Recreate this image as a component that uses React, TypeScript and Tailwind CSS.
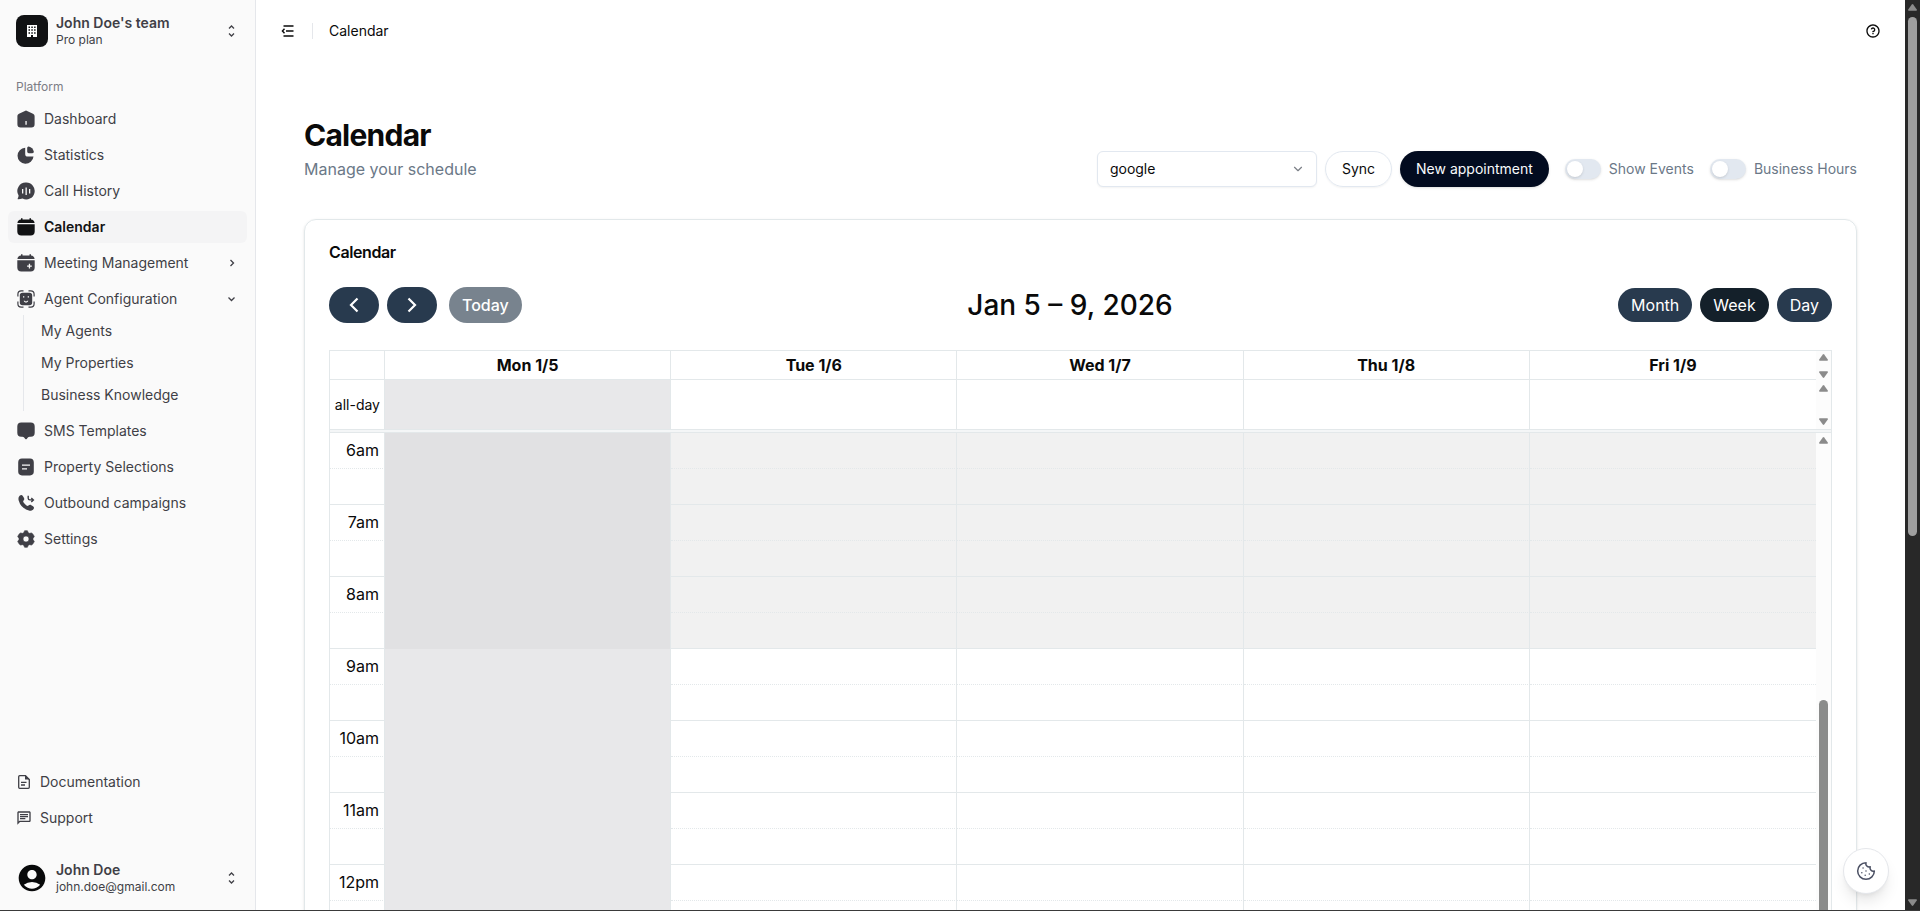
import { useState, type ReactNode } from "react";
import { ChevronDown, Cookie } from "lucide-react";
import { MdAccountCircle, MdOutlineChat } from "react-icons/md";
import { RiQuestionLine } from "react-icons/ri";

type IconProps = { children: ReactNode };

const NavSvg = ({ children }: IconProps) => (
  <svg width="20" height="20" viewBox="0 0 20 20" fill="currentColor" className="shrink-0" aria-hidden="true">
    {children}
  </svg>
);

const icons = {
  dashboard: (
    <NavSvg>
      <path
        fillRule="evenodd"
        d="M8.9 1.900a2.400 2.400 0 0 1 2.200 0l5.900 2.800c1 .5 1.600 1.400 1.600 2.500v8a3.300 3.300 0 0 1-3.300 3.300H4.700a3.300 3.300 0 0 1-3.300-3.300v-8c0-1.100.6-2 1.600-2.500zM9.400 12v3.800h1.300V12z"
      />
    </NavSvg>
  ),
  statistics: (
    <NavSvg>
      <path d="M9.200 2.800a8 8 0 1 0 8.300 8.700h-5.700a2.600 2.600 0 0 1-2.600-2.600z" />
      <path d="M11.200 3c0-.9.700-1.700 1.600-1.500a7 7 0 0 1 5 5c.2.900-.6 1.700-1.500 1.700h-3.500A1.600 1.600 0 0 1 11.200 6.600z" />
    </NavSvg>
  ),
  history: (
    <NavSvg>
      <path
        fillRule="evenodd"
        d="M10.200 1.600a8.400 8.400 0 1 1-3.700 15.900c-1.300.5-2.700.8-4.200.8-.5 0-.8-.5-.6-.9.500-1 .9-2 .9-3A8.400 8.400 0 0 1 10.200 1.600zM6 8v4.600h1.300V8zm3.500-1.400V14h1.300V6.600zM13 8v4.600h1.300V8z"
      />
    </NavSvg>
  ),
  calendar: (
    <NavSvg>
      <path d="M5 1.200h1.500v1.300h7V1.200H15v1.400c2 .2 3.300 1.400 3.600 3.400H1.400C1.700 4 3 2.800 5 2.600zM1.300 7.300h17.400v7.200c0 2.500-1.500 4-4 4H5.300c-2.500 0-4-1.500-4-4z" />
    </NavSvg>
  ),
  meeting: (
    <NavSvg>
      <path d="M5 1.200h1.500v1.300h7V1.200H15v1.400c2 .2 3.300 1.400 3.600 3.400H1.400C1.700 4 3 2.800 5 2.600z" />
      <path
        fillRule="evenodd"
        d="M1.300 7.300h17.400v7.200c0 2.500-1.500 4-4 4H5.300c-2.500 0-4-1.500-4-4zM12.800 10.800v1.700h-1.700v1.300h1.700v1.700h1.300v-1.700h1.700v-1.300h-1.700v-1.700z"
      />
    </NavSvg>
  ),
  agent: (
    <NavSvg>
      <path
        d="M1.900 7.500V5.200c0-2.100 1.200-3.300 3.300-3.300h2.300m5 0h2.300c2.100 0 3.300 1.200 3.300 3.300v2.300m0 5v2.300c0 2.100-1.200 3.300-3.300 3.300h-2.300m-5 0H5.200c-2.100 0-3.300-1.200-3.300-3.300v-2.300"
        fill="none"
        stroke="currentColor"
        strokeWidth="1.200"
      />
      <path
        fillRule="evenodd"
        d="M6.500 3.800h7a2.700 2.700 0 0 1 2.700 2.700v7a2.700 2.700 0 0 1-2.700 2.700h-7a2.700 2.700 0 0 1-2.700-2.700v-7a2.700 2.700 0 0 1 2.700-2.700zM7 7.300v1.300h1.300V7.300zm4.700 0v1.300H13V7.300zM7.700 11.800c.3 1.200 1.200 1.800 2.300 1.800s2-.6 2.300-1.800h-1.100c-.2.500-.6.800-1.200.8s-1-.3-1.200-.8z"
      />
    </NavSvg>
  ),
  sms: (
    <NavSvg>
      <path d="M5.200 1.600h9.600a3.900 3.900 0 0 1 3.900 3.900v6.300a3.900 3.900 0 0 1-3.900 3.900h-1.200c-.6 0-1 .2-1.500.6l-1.400 1.600a.9.900 0 0 1-1.400 0l-1.400-1.600c-.5-.4-.9-.6-1.500-.6H5.200a3.900 3.900 0 0 1-3.900-3.900V5.500a3.900 3.900 0 0 1 3.900-3.900z" />
    </NavSvg>
  ),
  property: (
    <NavSvg>
      <path
        fillRule="evenodd"
        d="M6 1.600h8A3.800 3.800 0 0 1 17.800 5.400v9.200A3.800 3.800 0 0 1 14 18.400H6a3.800 3.800 0 0 1-3.800-3.800V5.400A3.800 3.800 0 0 1 6 1.600zM6 7.500v1.300h8V7.500zm0 3.700v1.300h5v-1.300z"
      />
    </NavSvg>
  ),
  outbound: (
    <NavSvg>
      <path d="M3.900 2.600c1-.8 2.200-.7 2.900.4l1.100 1.800c.6 1 .5 1.900-.3 2.800-.6.700-.5 1.200 0 2a9 9 0 0 0 2.900 2.900c.8.500 1.300.5 2 0 .9-.8 1.800-.9 2.800-.3l1.700 1c1.200.8 1.300 2 .4 3-1.100 1.300-2.600 1.800-4.500 1.300A14.600 14.600 0 0 1 2.600 7.200c-.4-1.900 0-3.500 1.300-4.600z" />
      <path d="M12.200 2.800v2.400c0 1.100.6 1.700 1.700 1.700h3M15.300 4.900l2.100 2-2.100 2" fill="none" stroke="currentColor" strokeWidth="1.400" />
    </NavSvg>
  ),
  settings: (
    <NavSvg>
      <path
        fillRule="evenodd"
        d="M8.600 1.700h2.800l.9 2 1 .6 2.300-.3 1.400 1.200 1.300 2.300-1.300 1.900v1.200l1.300 1.900-1.300 2.300-1.400 1.200-2.300-.3-1 .6-.9 2H8.600l-.9-2-1-.6-2.300.3L3 14.800l-1.300-2.300L3 10.600V9.400L1.700 7.500 3 5.200 4.400 4l2.300.3 1-.6zM10 7a3 3 0 1 0 0 6 3 3 0 0 0 0-6z"
        stroke="currentColor"
        strokeWidth=".6"
        strokeLinejoin="round"
      />
    </NavSvg>
  ),
};

const UpDown = () => (
  <svg width="16" height="16" viewBox="0 0 16 16" fill="none" stroke="currentColor" strokeWidth="1.300" className="shrink-0" aria-hidden="true">
    <path d="M6 5.500 8.500 3 11 5.500M6 10.500 8.500 13l2.500-2.500" />
  </svg>
);

const Arrow = ({ down = false }: { down?: boolean }) => (
  <svg width="9" height="7" viewBox="0 0 9 7" fill="#8b8b8b" className={down ? "rotate-180" : ""} aria-hidden="true">
    <path d="M3.800.5a.9.900 0 0 1 1.400 0L8.800 5.500c.3.600.1 1.200-.6 1.200H.8C.1 6.700-.1 6.100.2 5.500z" />
  </svg>
);

type NavItem = {
  label: string;
  icon: ReactNode;
  active?: boolean;
  state?: "closed" | "open";
  children?: string[];
};

const navItems: NavItem[] = [
  { label: "Dashboard", icon: icons.dashboard },
  { label: "Statistics", icon: icons.statistics },
  { label: "Call History", icon: icons.history },
  { label: "Calendar", icon: icons.calendar, active: true },
  { label: "Meeting Management", icon: icons.meeting, state: "closed" },
  {
    label: "Agent Configuration",
    icon: icons.agent,
    state: "open",
    children: ["My Agents", "My Properties", "Business Knowledge"],
  },
  { label: "SMS Templates", icon: icons.sms },
  { label: "Property Selections", icon: icons.property },
  { label: "Outbound campaigns", icon: icons.outbound },
  { label: "Settings", icon: icons.settings },
];

const days = ["Mon 1/5", "Tue 1/6", "Wed 1/7", "Thu 1/8", "Fri 1/9"];
const hours = ["6am", "7am", "8am", "9am", "10am", "11am", "12pm"];
const BUSINESS_START = 3;

// One entry per half hour row
const slots = hours.flatMap((hour, i) => [
  { key: hour, label: hour, closed: i < BUSINESS_START, half: false },
  { key: `${hour}-30`, label: "", closed: i < BUSINESS_START, half: true },
]);

function Sidebar() {
  return (
    <aside className="flex w-64 shrink-0 flex-col border-r border-[#e5e7eb] bg-[#fafafa] text-[#3f3f46]">
      <div className="px-2 pt-[7px] pb-2">
        <button type="button" className="flex h-12 w-full items-center gap-2 px-2 text-left">
          <span className="flex size-8 items-center justify-center rounded-lg bg-[#111214] text-white">
            <svg width="12" height="14" viewBox="0 0 12 14" fill="currentColor" aria-hidden="true">
              <path
                fillRule="evenodd"
                d="M1 1h10v12H7v-2H5v2H1zM2.500 2.500V4H4V2.500zm2.800 0V4h1.500V2.500zm2.800 0V4h1.500V2.500zM2.500 5.300v1.500H4V5.300zm2.800 0v1.500h1.500V5.300zm2.800 0v1.500h1.500V5.300zM2.500 8.200v1.500H4V8.200zm2.800 0v1.500h1.500V8.200zm2.800 0v1.500h1.500V8.200z"
              />
            </svg>
          </span>
          <span className="flex flex-1 flex-col">
            <span className="text-sm leading-[18px] font-semibold">John Doe's team</span>
            <span className="text-xs leading-4">Pro plan</span>
          </span>
          <UpDown />
        </button>
      </div>

      <nav className="flex-1 p-2">
        <div className="flex h-8 items-center px-2 text-xs text-[#7c7c84]">Platform</div>
        <ul className="flex flex-col gap-1">
          {navItems.map((item) => (
            <li key={item.label}>
              <a
                href="#"
                className={
                  item.active
                    ? "flex h-8 items-center gap-2 rounded-md bg-[#f4f4f5] px-2 text-sm font-semibold text-[#111214]"
                    : "flex h-8 items-center gap-2 rounded-md px-2 text-sm"
                }
              >
                {item.icon}
                <span className="flex-1">{item.label}</span>
                {item.state && (
                  <svg width="16" height="16" viewBox="0 0 16 16" fill="none" stroke="currentColor" strokeWidth="1.300" aria-hidden="true">
                    <path d={item.state === "open" ? "M5.500 6.500l3 3 3-3" : "M7.500 5l3 3-3 3"} />
                  </svg>
                )}
              </a>
              {item.children && (
                <ul className="ml-[15px] flex flex-col gap-1 border-l border-[#e5e7eb] py-0.5 pl-[17px]">
                  {item.children.map((child) => (
                    <li key={child}>
                      <a href="#" className="flex h-7 items-center text-sm">
                        {child}
                      </a>
                    </li>
                  ))}
                </ul>
              )}
            </li>
          ))}
        </ul>
      </nav>

      <ul className="flex flex-col gap-1 p-2 text-sm">
        <li>
          <a href="#" className="flex h-8 items-center gap-2 px-2">
            <svg width="16" height="16" viewBox="0 0 16 16" fill="none" stroke="currentColor" strokeWidth="1.300" aria-hidden="true">
              <path d="M9.500 1.700H3.700c-.6 0-1 .4-1 1v10.600c0 .6.4 1 1 1h8.600c.6 0 1-.4 1-1V5.500z" />
              <path d="M9 1.200v4.300h4.800z" fill="currentColor" stroke="none" />
              <path d="M5 8.300h5.500M5 11h4" />
            </svg>
            Documentation
          </a>
        </li>
        <li>
          <a href="#" className="flex h-8 items-center gap-2 px-2">
            <MdOutlineChat size={16} />
            Support
          </a>
        </li>
      </ul>

      <div className="p-2 pt-3">
        <button type="button" className="flex h-12 w-full items-center gap-2 px-2 text-left">
          <MdAccountCircle size={32} className="text-[#08090a]" />
          <span className="flex flex-1 flex-col">
            <span className="text-sm leading-[18px] font-semibold">John Doe</span>
            <span className="text-xs leading-4">john.doe@gmail.com</span>
          </span>
          <UpDown />
        </button>
      </div>
    </aside>
  );
}

function Toggle({ id, label }: { id: string; label: string }) {
  const [on, setOn] = useState(false);
  return (
    <div className="flex items-center gap-2">
      <input
        id={id}
        type="checkbox"
        role="switch"
        checked={on}
        onChange={() => setOn(!on)}
        className="flex h-5 w-9 cursor-pointer appearance-none items-center rounded-full bg-[#e2e8f0] px-0.5 shadow-sm before:size-4 before:rounded-full before:bg-white before:shadow checked:justify-end checked:bg-[#020b1f]"
      />
      <label htmlFor={id} className="text-sm text-[#6b7887]">
        {label}
      </label>
    </div>
  );
}

function WeekTable() {
  return (
    <table className="w-full table-fixed border-separate border-spacing-0 border border-[#e3e8ea] text-base">
      <colgroup>
        <col className="w-[55px]" />
        {days.map((day) => (
          <col key={day} />
        ))}
        <col className="w-[15px]" />
      </colgroup>
      <thead>
        <tr className="h-[29px]">
          <td className="border-r border-b border-[#e3e8ea]" />
          {days.map((day, i) => (
            <th
              key={day}
              scope="col"
              className={i < 4 ? "border-r border-b border-[#e3e8ea] p-0 font-bold" : "border-b border-[#e3e8ea] p-0 font-bold"}
            >
              {day}
            </th>
          ))}
          <td className="bg-[#fcfcfc] p-0">
            <div className="flex h-7 flex-col items-center justify-between py-0.5">
              <Arrow />
              <Arrow down />
            </div>
          </td>
        </tr>
      </thead>
      <tbody>
        <tr className="h-[50px]">
          <th scope="row" className="border-r border-b border-[#e3e8ea] p-0 pr-1 text-right text-sm font-normal">
            all-day
          </th>
          {days.map((day, i) => (
            <td
              key={day}
              className={
                i === 0
                  ? "border-r border-b border-[#e3e8ea] bg-[#e8e8ea]"
                  : i < 4
                    ? "border-r border-b border-[#e3e8ea]"
                    : "border-b border-[#e3e8ea]"
              }
            />
          ))}
          <td className="border-b border-[#e3e8ea] bg-[#fcfcfc] p-0">
            <div className="flex h-12 flex-col items-center justify-between py-1">
              <Arrow />
              <Arrow down />
            </div>
          </td>
        </tr>
        <tr className="h-[3px]">
          <td colSpan={7} className="border-b border-[#e3e8ea] bg-[#f4f6f7] p-0" />
        </tr>
        {slots.map((slot, row) => (
          <tr key={slot.key} className="h-9">
            <th
              scope="row"
              className={
                slot.half
                  ? "border-r border-b border-[#e3e8ea] p-0"
                  : "border-r border-b border-[#e3e8ea] p-0 pr-[5px] pb-0.5 text-right font-normal [border-bottom-style:dotted]"
              }
            >
              {slot.label}
            </th>
            {days.map((day, i) => {
              if (i === 0) {
                return (
                  <td
                    key={day}
                    className={slot.closed ? "border-r border-r-[#e3e8ea] bg-[#e1e1e3]" : "border-r border-r-[#e3e8ea] bg-[#e8e8ea]"}
                  />
                );
              }
              return (
                <td
                  key={day}
                  className={[
                    "border-b border-[#e3e8ea]",
                    i < 4 ? "border-r" : "",
                    slot.half ? "" : "[border-bottom-style:dotted]",
                    slot.closed ? "bg-[#f1f1f1]" : "",
                  ].join(" ")}
                />
              );
            })}
            {row === 0 && (
              <td rowSpan={slots.length} className="bg-[#fcfcfc] p-0 align-top">
                <div className="flex flex-col items-center pt-1">
                  <Arrow />
                  <div className="mt-64 h-56 w-[9px] rounded-full bg-[#8b8c8b]" />
                </div>
              </td>
            )}
          </tr>
        ))}
      </tbody>
    </table>
  );
}

export default function App() {
  return (
    <div className="flex h-screen overflow-hidden border-b border-[#3a3a3a] bg-white font-['Inter',sans-serif] text-[#0a0a0a]">
      <Sidebar />

      <main className="relative min-w-0 flex-1 overflow-hidden">
        <header className="flex h-[62px] items-center px-6">
          <button type="button" aria-label="Toggle sidebar" className="flex size-4 items-center justify-center">
            <svg width="16" height="16" viewBox="0 0 16 16" fill="none" stroke="currentColor" strokeWidth="1.400" aria-hidden="true">
              <path d="M3.500 3h10M6 8h7.500M3.500 13h10M4.500 5.700 2.400 8l2.100 2.300" />
            </svg>
          </button>
          <span className="mr-4 ml-4 h-4 w-px bg-[#e5e7eb]" />
          <span className="text-sm">Calendar</span>
          <button type="button" aria-label="Help" className="ml-auto">
            <RiQuestionLine size={16} />
          </button>
        </header>

        <div className="px-12 pt-[55px]">
          <div className="flex items-end justify-between">
            <div className="pb-1.5">
              <h1 className="text-3xl font-bold tracking-tight">Calendar</h1>
              <p className="mt-1 text-base text-[#6b7887]">Manage your schedule</p>
            </div>
            <div className="flex items-center gap-4">
              <div className="flex items-center gap-2">
                <div className="relative">
                  <select
                    aria-label="Calendar provider"
                    className="h-9 w-[220px] appearance-none rounded-md border border-[#e2e8f0] bg-white px-3 text-sm shadow-xs"
                  >
                    <option>google</option>
                  </select>
                  <ChevronDown size={14} className="pointer-events-none absolute top-[11px] right-3 text-[#7b7f86]" />
                </div>
                <button type="button" className="h-9 rounded-full border border-[#e2e8f0] px-4 text-sm shadow-xs">
                  Sync
                </button>
                <button type="button" className="h-9 rounded-full bg-[#020b1f] px-4 text-sm text-[#f8fafc] shadow-sm">
                  New appointment
                </button>
              </div>
              <Toggle id="show-events" label="Show Events" />
              <Toggle id="business-hours" label="Business Hours" />
            </div>
          </div>

          <section className="mt-8 rounded-xl border border-[#e2e8ea] p-6 shadow-sm">
            <h2 className="text-base leading-4 font-semibold tracking-tight">Calendar</h2>
            <div className="mt-[27px] flex items-center justify-between">
              <div className="flex items-center">
                <button type="button" aria-label="Previous week" className="flex h-9 w-[50px] items-center justify-center rounded-full bg-[#283a4e] text-white">
                  <svg width="16" height="18" viewBox="0 0 16 18" fill="none" stroke="currentColor" strokeWidth="2.200" aria-hidden="true">
                    <path d="m11.500 2.500-6.500 6.500 6.500 6.500" />
                  </svg>
                </button>
                <button type="button" aria-label="Next week" className="ml-2 flex h-9 w-[50px] items-center justify-center rounded-full bg-[#283a4e] text-white">
                  <svg width="16" height="18" viewBox="0 0 16 18" fill="none" stroke="currentColor" strokeWidth="2.200" aria-hidden="true">
                    <path d="m4.500 2.500 6.500 6.500-6.500 6.500" />
                  </svg>
                </button>
                <button type="button" className="ml-3 h-9 rounded-full bg-[#78838e] px-[13px] text-base font-medium text-white">
                  Today
                </button>
              </div>
              <div className="text-[28px] leading-9 font-medium">Jan 5 – 9, 2026</div>
              <div className="flex items-center gap-2">
                <button type="button" className="h-[34px] rounded-full bg-[#283a4e] px-[13px] text-base text-white">
                  Month
                </button>
                <button type="button" className="h-[34px] rounded-full bg-[#14202a] px-[13px] text-base text-white">
                  Week
                </button>
                <button type="button" className="h-[34px] rounded-full bg-[#283a4e] px-[13px] text-base text-white">
                  Day
                </button>
              </div>
            </div>
            <div className="mt-[27px]">
              <WeekTable />
            </div>
          </section>
        </div>

        <button
          type="button"
          aria-label="Cookie settings"
          className="absolute right-4 bottom-4 flex size-[46px] items-center justify-center rounded-full border border-[#e5e7eb] bg-white text-[#4b5063] shadow-lg"
        >
          <Cookie size={20} strokeWidth={1.8} />
        </button>
      </main>

      {/* Page scrollbar */}
      <div className="flex w-[15px] shrink-0 flex-col items-center justify-between bg-[#282828] py-1">
        <div className="flex min-h-0 flex-1 flex-col items-center gap-1.5">
          <Arrow />
          <div className="h-[58%] w-[9px] rounded-full bg-[#9f9f9f]" />
        </div>
        <Arrow down />
      </div>
    </div>
  );
}
